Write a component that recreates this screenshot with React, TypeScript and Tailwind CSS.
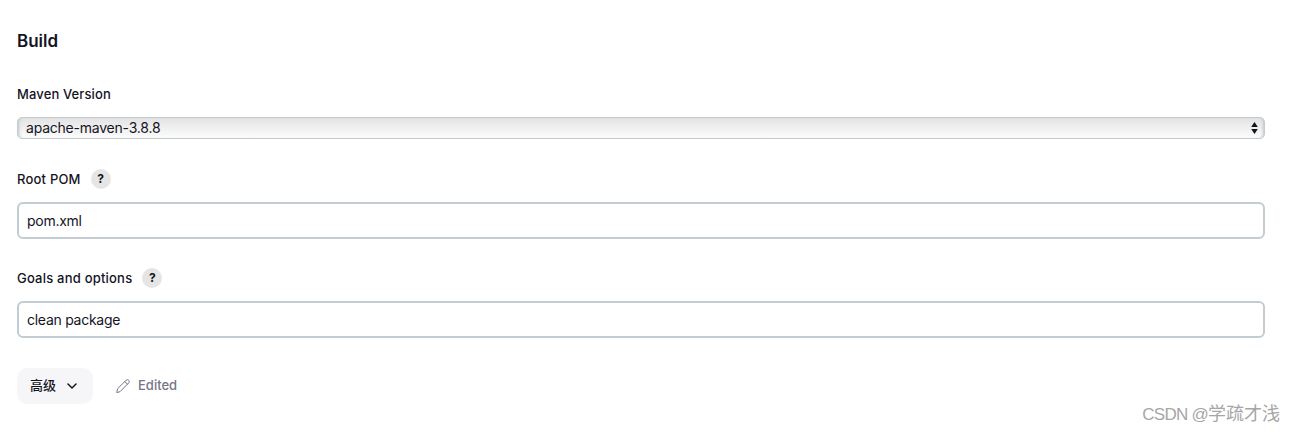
import { useState } from 'react';

function HelpButton({ topic }: { topic: string }) {
  return (
    <button
      type="button"
      aria-label={`Help for feature: ${topic}`}
      className="ml-2.5 flex h-5 w-5 items-center justify-center rounded-full bg-[#e5e5e5] text-[12px] leading-5 font-bold"
    >
      ?
    </button>
  );
}

interface TextFieldProps {
  id: string;
  label: string;
  value: string;
  onChange: (value: string) => void;
}

function TextField({ id, label, value, onChange }: TextFieldProps) {
  return (
    <div>
      <div className="flex h-5 items-center">
        <label htmlFor={id} className="text-[13px] leading-5 font-medium tracking-[0.21px]">
          {label}
        </label>
        <HelpButton topic={label} />
      </div>
      <input
        id={id}
        type="text"
        value={value}
        onChange={(e) => onChange(e.target.value)}
        className="mt-[13px] block h-[37px] w-full rounded-md border-2 border-[#c3ccd1] bg-white px-2 text-[14px] tracking-[-0.27px] focus:outline-none"
      />
    </div>
  );
}

export default function App() {
  const [rootPom, setRootPom] = useState('pom.xml');
  const [goals, setGoals] = useState('clean package');

  return (
    <div className="relative h-[432px] w-full overflow-hidden bg-white pt-7 pr-[30px] pl-[17px] font-['Inter','Noto_Sans_CJK_SC',sans-serif] text-[#14141f]">
      <h2 className="text-[17px] leading-[26px] font-semibold">Build</h2>

      {/* Maven version */}
      <div className="mt-[30px]">
        <label htmlFor="maven" className="block text-[13px] leading-5 font-medium tracking-[0.12px]">
          Maven Version
        </label>
        <div className="mt-[13px] flex h-[22px] items-center rounded-[5px] border border-[#c3ccd1] bg-linear-to-b from-[#e3e3e3] to-[#fcfcfc] shadow-[inset_3px_0_3px_-2px_#c0c5c7,inset_-3px_0_3px_-2px_#c0c5c7]">
          <select
            id="maven"
            className="h-5 flex-1 appearance-none bg-transparent pl-2 text-[14px] leading-5 tracking-[-0.22px] focus:outline-none"
          >
            <option>apache-maven-3.8.8</option>
          </select>
          <svg viewBox="0 0 7 12" className="mr-1.5 h-3 w-[7px] fill-current">
            <path d="M3.5 0 6.8 5H.2zM.2 7h6.6l-3.3 5z" />
          </svg>
        </div>
      </div>

      <div className="mt-[30px]">
        <TextField id="pom" label="Root POM" value={rootPom} onChange={setRootPom} />
      </div>
      <div className="mt-[29px]">
        <TextField id="goals" label="Goals and options" value={goals} onChange={setGoals} />
      </div>

      <div className="mt-[30px] flex h-9 items-center">
        <button
          type="button"
          className="flex h-9 w-[76px] items-center rounded-[10px] bg-[#f6f6f8] pl-[13px] text-[13px] font-medium"
        >
          高级
          <svg viewBox="0 0 10 6" className="ml-[11px] h-1.5 w-2.5 fill-none stroke-current stroke-[1.5]">
            <path d="m1 1 4 4 4-4" strokeLinecap="round" strokeLinejoin="round" />
          </svg>
        </button>
        <span className="ml-[23px] flex items-center text-[13px] font-medium text-[#757588]">
          <svg viewBox="0 0 14 14" className="mr-2 h-3.5 w-3.5 fill-none stroke-current">
            <path
              d="m.8 13.2.8-3.5 8.5-8.4a1.8 1.8 0 0 1 2.6 2.6l-8.4 8.5zM8.8 2.6l2.6 2.6"
              strokeLinecap="round"
              strokeLinejoin="round"
            />
          </svg>
          Edited
        </span>
      </div>

      {/* Watermark */}
      <div className="absolute top-[402px] right-[15px] flex items-baseline font-['Liberation_Sans','Noto_Sans_CJK_SC',sans-serif] text-[18px] leading-6 whitespace-nowrap text-[#a6a6a6]">
        <span className="text-[17px] tracking-[-0.75px]">CSDN @</span>
        <span>学疏才浅</span>
      </div>
    </div>
  );
}
